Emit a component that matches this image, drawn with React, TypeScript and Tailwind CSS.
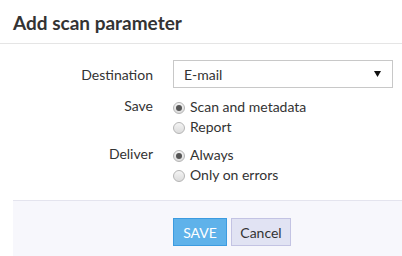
import { useState } from "react";

function Radio({ checked, label, onClick }: { checked: boolean; label: string; onClick: () => void }) {
  return (
    <label className="flex items-center gap-[5px] h-[20px] cursor-pointer" onClick={onClick}>
      <span className="w-[12px] h-[12px] rounded-full border border-[#b5b5b5] bg-gradient-to-b from-[#f4f4f4] to-[#dcdcdc] flex items-center justify-center mt-[3px]">
        {checked && <span className="w-[6px] h-[6px] rounded-full bg-[#555]" />}
      </span>
      <span className="text-[14px] text-[#333]">{label}</span>
    </label>
  );
}

export default function App() {
  const [save, setSave] = useState("scan");
  const [deliver, setDeliver] = useState("always");

  return (
    <div className="w-[402px] h-[256px] bg-white overflow-hidden text-[#333]" style={{ fontFamily: "Lato, 'Open Sans', sans-serif" }}>
      <div className="h-[44px] border-b border-[#e5e5e5] flex items-center px-[13px] pt-[1px]">
        <h1 className="text-[19px] font-bold text-[#333] leading-none">Add scan parameter</h1>
      </div>

      <div className="h-[156px] pt-[16px]">
        <div className="grid grid-cols-[153px_220px] gap-x-[20px] content-start">
          <div className="text-[14px] text-right h-[28px] flex items-center justify-end">Destination</div>
          <div className="relative h-[28px] border border-[#c8c8c8] flex items-center px-[10px] text-[14px]">
            E-mail
            {/* select arrow */}
            <svg className="absolute right-[11px] top-[10px]" width="7" height="6" viewBox="0 0 7 6">
              <path d="M0 0h7L3.5 6z" fill="#111" />
            </svg>
          </div>

          <div className="text-[14px] text-right pt-[8px] leading-[20px]">Save</div>
          <div className="flex flex-col pt-[8px]">
            <Radio checked={save === "scan"} label="Scan and metadata" onClick={() => setSave("scan")} />
            <Radio checked={save === "report"} label="Report" onClick={() => setSave("report")} />
          </div>

          <div className="text-[14px] text-right pt-[8px] leading-[20px]">Deliver</div>
          <div className="flex flex-col pt-[8px]">
            <Radio checked={deliver === "always"} label="Always" onClick={() => setDeliver("always")} />
            <Radio checked={deliver === "errors"} label="Only on errors" onClick={() => setDeliver("errors")} />
          </div>
        </div>
      </div>

      <div className="ml-[13px] h-[56px] bg-[#f7f7fc] border-t border-[#e4e4ee] flex items-start pt-[17px] pl-[160px] gap-[4px]">
        <button className="w-[54px] h-[28px] bg-[#5fb2ea] border border-[#3c9be0] text-white text-[14px]">SAVE</button>
        <button className="w-[60px] h-[28px] bg-[#e1e3f3] border border-[#c3c3e3] text-[#333] text-[14px]">Cancel</button>
      </div>
    </div>
  );
}
